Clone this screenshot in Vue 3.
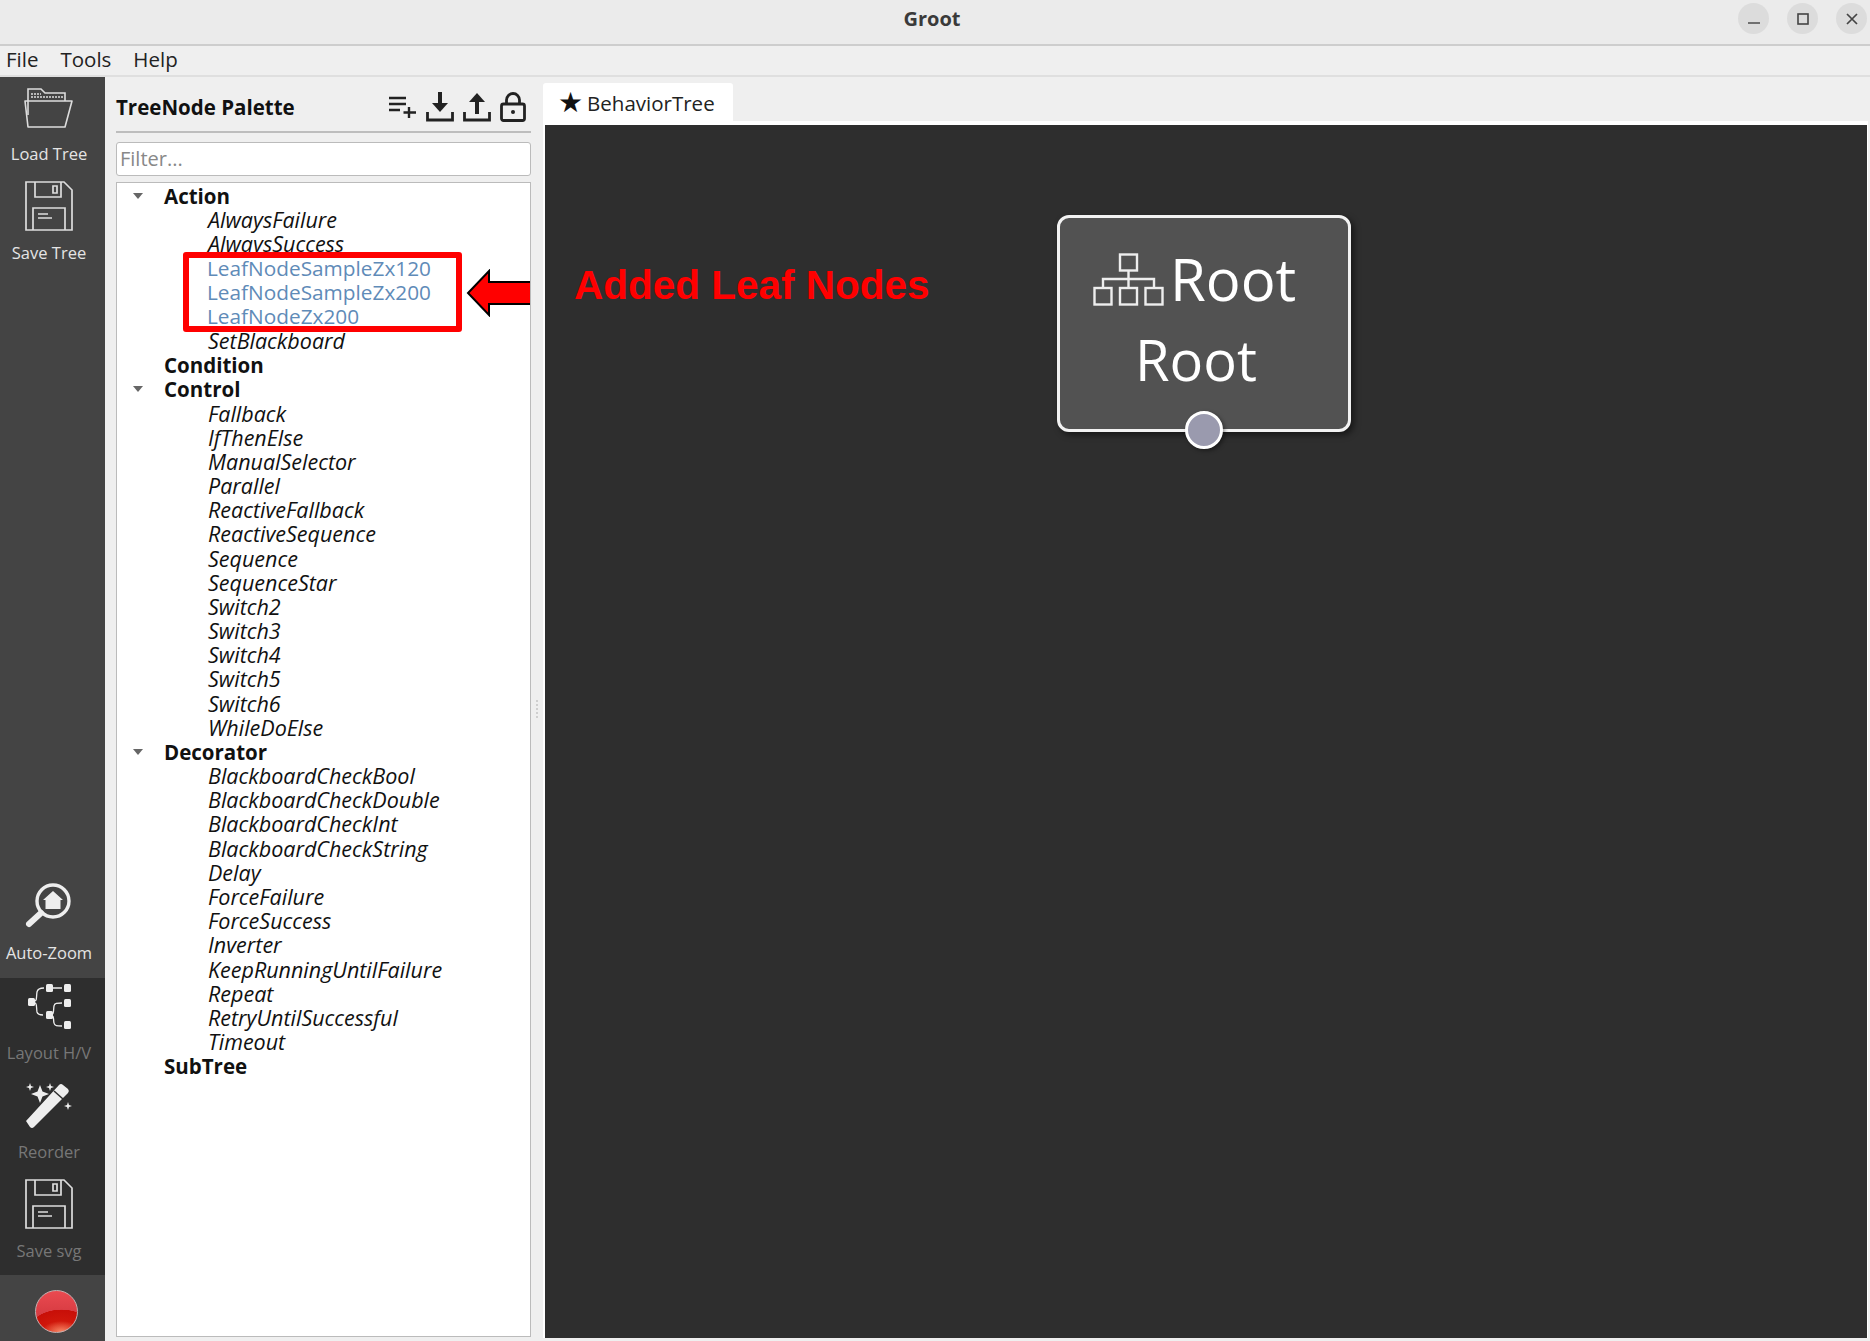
<template>
  <div class="window">
    <header class="titlebar">
      <span class="title">Groot</span>
      <div class="win-btns">
        <button class="win-btn"><svg width="14" height="14" viewBox="0 0 14 14"><path d="M1 11h12" stroke="#555" stroke-width="1.6" /></svg></button>
        <button class="win-btn"><svg width="14" height="14" viewBox="0 0 14 14"><rect x="2" y="2" width="10" height="10" fill="none" stroke="#444" stroke-width="1.6" /></svg></button>
        <button class="win-btn"><svg width="14" height="14" viewBox="0 0 14 14"><path d="M2 2l10 10M12 2L2 12" stroke="#444" stroke-width="1.7" /></svg></button>
      </div>
    </header>

    <nav class="menubar">
      <span>File</span><span>Tools</span><span>Help</span>
    </nav>

    <div class="body">
      <aside class="sidebar">
        <div class="tool top">
          <svg class="tool-icon" width="50" height="44" viewBox="0 0 50 44" fill="none" stroke="#ddd" stroke-width="1.6">
            <path d="M4 30V4h13l4 4h20v8" />
            <path d="M7 12h32M7 9h10" stroke-dasharray="2 1" />
            <path d="M1 16h47l-7 26H4z" stroke-linejoin="round" />
          </svg>
          <span>Load Tree</span>
        </div>
        <div class="tool top">
          <svg class="tool-icon" width="48" height="50" viewBox="0 0 48 50" fill="none" stroke="#ddd" stroke-width="1.7">
            <path d="M1 1h38l8 8v40H1z" />
            <path d="M10 1v15h26V1M28 5h4v7h-4z" />
            <path d="M8 49V27h32v22" />
            <path d="M13 33h10M13 37h14" stroke-width="1.5" />
          </svg>
          <span>Save Tree</span>
        </div>
        <div class="spacer"></div>
        <div class="tool zoom">
          <svg class="tool-icon" width="48" height="46" viewBox="0 0 48 46" fill="none">
            <circle cx="28" cy="18" r="16" stroke="#eee" stroke-width="3.4" />
            <path d="M16 30L4 41" stroke="#eee" stroke-width="6" stroke-linecap="round" />
            <path d="M28 8l10 9h-2.500v9h-15v-9H18z" fill="#eee" />
          </svg>
          <span>Auto-Zoom</span>
        </div>
        <div class="tool-group">
          <div class="tool dim">
            <svg class="tool-icon" width="44" height="46" viewBox="0 0 44 46" fill="none" stroke="#eee" stroke-width="1.3">
              <path d="M5 19c6 0 4-5 5-10 .5-3 3-4 7-4M5 19c6 0 4 5 5 10 .5 2 3 3 6 3M22 5h13M22 32c6 0 4-4 5-9 .5-3 3-3 8-3M22 32c6 0 4 4 5 8 .5 3 3 3 8 3" />
              <g fill="#eee" stroke="none">
                <rect x="1" y="15" width="7" height="8" rx="1.500" />
                <rect x="19" y="1" width="7" height="8" rx="1.500" />
                <rect x="37" y="1" width="7" height="8" rx="1.500" />
                <rect x="19" y="28" width="7" height="8" rx="1.500" />
                <rect x="37" y="16" width="7" height="8" rx="1.500" />
                <rect x="37" y="38" width="7" height="8" rx="1.500" />
              </g>
            </svg>
            <span>Layout H/V</span>
          </div>
          <div class="tool dim">
            <svg class="tool-icon" width="46" height="46" viewBox="0 0 46 46">
              <path d="M0 39L33 3a3 3 0 0 1 4 0l5 4a3 3 0 0 1 0 4L8 45a3 3 0 0 1-4 0z" fill="#eee" />
              <path d="M28 9l9 8" stroke="#2e2e2e" stroke-width="1.500" />
              <path d="M14 3l2.500 6.500L23 12l-6.500 2.500L14 21l-2.500-6.500L5 12l6.500-2.500zM4 1l1 3 3 1-3 1-1 3-1-3-3-1 3-1zM24 1l1 3 3 1-3 1-1 3-1-3-3-1 3-1zM42 20l1 3 3 1-3 1-1 3-1-3-3-1 3-1z" fill="#eee" />
            </svg>
            <span>Reorder</span>
          </div>
          <div class="tool dim">
            <svg class="tool-icon" width="48" height="48" viewBox="0 0 48 50" fill="none" stroke="#ddd" stroke-width="1.7">
              <path d="M1 1h38l8 8v40H1z" />
              <path d="M10 1v15h26V1M28 5h4v7h-4z" />
              <path d="M8 49V27h32v22" />
              <path d="M13 33h10M13 37h14" stroke-width="1.500" />
            </svg>
            <span>Save svg</span>
          </div>
        </div>
        <div class="ball-wrap">
          <div class="ball"></div>
        </div>
      </aside>

      <section class="palette">
        <div class="palette-head">
          <strong>TreeNode Palette</strong>
          <div class="palette-actions">
            <svg width="28" height="22" viewBox="0 0 28 22" fill="none" stroke="#222" stroke-width="2.400">
              <path d="M0 2h17M0 8h17M0 14h11M20 11v11M14.500 16.500H27" />
            </svg>
            <svg width="28" height="30" viewBox="0 0 28 30" fill="none" stroke="#222" stroke-width="2.800">
              <path d="M1.500 20v8h25v-8" />
              <path d="M14 0v12" stroke-width="4" />
              <path d="M6 11h16l-8 9z" fill="#222" stroke="none" />
            </svg>
            <svg width="28" height="30" viewBox="0 0 28 30" fill="none" stroke="#222" stroke-width="2.800">
              <path d="M1.500 20v8h25v-8" />
              <path d="M14 10v12" stroke-width="4" />
              <path d="M6 10h16l-8-9z" fill="#222" stroke="none" />
            </svg>
            <svg width="26" height="30" viewBox="0 0 26 30" fill="none" stroke="#222" stroke-width="2.800">
              <rect x="1.500" y="12" width="23" height="16.500" rx="2" />
              <path d="M6.500 12V8a6.500 6.500 0 0 1 13 0v4" />
              <circle cx="13" cy="20" r="2" fill="#222" stroke="none" />
            </svg>
          </div>
        </div>
        <input class="filter" type="text" placeholder="Filter..." />
        <div class="tree">
          <div v-for="cat in tree" :key="cat.name">
            <div class="row category">
              <span v-if="cat.items.length" class="caret"></span>
              {{ cat.name }}
            </div>
            <div
              v-for="item in cat.items"
              :key="item.name"
              class="row leaf"
              :class="{ added: item.added }"
            >{{ item.name }}</div>
          </div>
          <!-- annotation drawn over the list -->
          <div class="red-box"></div>
          <svg class="red-arrow" width="65" height="48" viewBox="0 0 65 48">
            <path d="M64 13H23V2L2 24l21 22V35h41" fill="#f00" stroke="#000" stroke-width="2" />
          </svg>
        </div>
      </section>

      <div class="splitter"><i></i><i></i><i></i><i></i><i></i></div>

      <section class="editor">
        <div class="tab"><span class="star">★</span>BehaviorTree</div>
        <div class="pane">
          <div class="canvas">
            <div class="note">Added Leaf Nodes</div>
            <div class="node">
              <div class="node-line first">
                <svg width="71" height="53" viewBox="0 0 71 53" fill="none" stroke="#eee" stroke-width="2.400">
                  <rect x="27" y="1.500" width="17" height="16" />
                  <rect x="1.500" y="35" width="17" height="16.500" />
                  <rect x="27" y="35" width="17" height="16.500" />
                  <rect x="52.500" y="35" width="17" height="16.500" />
                  <path d="M35.500 17.500V35M10 35v-9h51v9" />
                </svg>
                <span>Root</span>
              </div>
              <div class="node-line second">Root</div>
              <div class="port"></div>
            </div>
          </div>
        </div>
      </section>
    </div>
  </div>
</template>

<script setup>
const names = (list) => list.map((name) => ({ name }))

const tree = [
  {
    name: 'Action',
    items: [
      { name: 'AlwaysFailure' },
      { name: 'AlwaysSuccess' },
      { name: 'LeafNodeSampleZx120', added: true },
      { name: 'LeafNodeSampleZx200', added: true },
      { name: 'LeafNodeZx200', added: true },
      { name: 'SetBlackboard' }
    ]
  },
  { name: 'Condition', items: [] },
  {
    name: 'Control',
    items: names([
      'Fallback', 'IfThenElse', 'ManualSelector', 'Parallel', 'ReactiveFallback',
      'ReactiveSequence', 'Sequence', 'SequenceStar', 'Switch2', 'Switch3',
      'Switch4', 'Switch5', 'Switch6', 'WhileDoElse'
    ])
  },
  {
    name: 'Decorator',
    items: names([
      'BlackboardCheckBool', 'BlackboardCheckDouble', 'BlackboardCheckInt',
      'BlackboardCheckString', 'Delay', 'ForceFailure', 'ForceSuccess', 'Inverter',
      'KeepRunningUntilFailure', 'Repeat', 'RetryUntilSuccessful', 'Timeout'
    ])
  },
  { name: 'SubTree', items: [] }
]
</script>

<style>
html, body {
  margin: 0;
  background: #efefef;
}
</style>

<style scoped>
.window {
  width: 1870px;
  height: 1341px;
  display: flex;
  flex-direction: column;
  overflow: hidden;
  font-family: "Open Sans", "Noto Sans", sans-serif;
  background: #efefef;
  color: #111;
}

.titlebar {
  height: 44px;
  flex: none;
  position: relative;
  display: flex;
  align-items: center;
  justify-content: center;
  background: #ebebeb;
  border-bottom: 2px solid #cdcdcd;
}

.title {
  font-size: 20px;
  font-weight: 700;
  line-height: 38px;
  margin: 0 6px 6px 0;
  color: #3a3a3a;
}

.win-btns {
  position: absolute;
  right: 3px;
  top: 3px;
  display: flex;
  gap: 18px;
}

.win-btn {
  width: 31px;
  height: 31px;
  padding: 0;
  border: none;
  border-radius: 50%;
  background: #dcdcdc;
  display: flex;
  align-items: center;
  justify-content: center;
}

.menubar {
  height: 31px;
  flex: none;
  display: flex;
  align-items: center;
  gap: 22px;
  padding: 0 0 3px 6px;
  box-sizing: border-box;
  font-size: 20.500px;
  color: #222;
  border-bottom: 2px solid #dfdfdf;
}

.body {
  flex: 1;
  min-height: 0;
  display: flex;
}

.sidebar {
  width: 105px;
  flex: none;
  display: flex;
  flex-direction: column;
  background: #444;
}

.spacer {
  flex: 1;
}

.tool {
  height: 99px;
  display: flex;
  flex-direction: column;
  align-items: center;
  padding: 3px 7px 0 0;
  box-sizing: border-box;
  font-size: 16.500px;
  color: #e4e4e4;
}

.tool.top {
  padding-top: 5px;
}

.tool.zoom {
  padding-top: 2px;
}

.tool-icon {
  height: 50px;
  margin-bottom: 10px;
  flex: none;
}

.tool.dim {
  color: #777;
}

.tool-group {
  background: #2e2e2e;
}

.ball-wrap {
  height: 66px;
  box-sizing: border-box;
  display: flex;
  align-items: center;
  padding: 6px 0 0 35px;
}

.ball {
  width: 43px;
  height: 43px;
  box-sizing: border-box;
  border: 1px solid #c4b0b0;
  border-radius: 50%;
  background:
    radial-gradient(ellipse 20px 11px at 62% 100%, #f88a68 0%, transparent 100%),
    radial-gradient(ellipse 34px 23px at 62% 100%, #d8200f 0%, #c80f08 96%, transparent 98%),
    linear-gradient(#ea4a50, #c83038);
}

.palette {
  width: 415px;
  flex: none;
  margin-left: 11px;
  display: flex;
  flex-direction: column;
  padding-bottom: 4px;
}

.palette-head {
  height: 56px;
  flex: none;
  display: flex;
  align-items: center;
  justify-content: space-between;
  padding: 5px 5px 0 0;
  font-size: 20.500px;
  border-bottom: 2px solid #bdbdbd;
  box-sizing: border-box;
}

.palette-actions {
  display: flex;
  align-items: center;
  gap: 9px;
}

.filter {
  height: 34px;
  flex: none;
  margin-top: 9px;
  padding: 0 3px 2px;
  box-sizing: border-box;
  border: 1px solid #bbb;
  border-radius: 3px;
  background: #fff;
  font: 20px "Open Sans", "Noto Sans", sans-serif;
  outline: none;
}

.filter::placeholder {
  color: #888;
}

.tree {
  flex: 1;
  position: relative;
  margin-top: 6px;
  padding-top: 1px;
  background: #fff;
  border: 1px solid #bbb;
  overflow: hidden;
  font-size: 20.500px;
}

.row {
  height: 24.180px;
  line-height: 24.180px;
  white-space: nowrap;
}

.category {
  position: relative;
  padding-left: 47px;
  font-weight: 700;
}

.caret {
  position: absolute;
  left: 16px;
  top: 9px;
  border: 5px solid transparent;
  border-top: 6px solid #666;
  border-bottom: none;
}

.leaf {
  padding-left: 91px;
  font-style: italic;
  font-size: 21.500px;
  line-height: 23px;
}

.leaf.added {
  padding-left: 90px;
  font-style: normal;
  font-size: 20.800px;
  color: #5f8bb8;
}

.red-box {
  position: absolute;
  left: 66px;
  top: 69px;
  width: 279px;
  height: 80px;
  box-sizing: border-box;
  border: 6px solid #f00;
  border-radius: 3px;
}

.red-arrow {
  position: absolute;
  left: 349px;
  top: 86px;
}

.splitter {
  width: 12px;
  flex: none;
  display: flex;
  flex-direction: column;
  align-items: center;
  justify-content: center;
  gap: 2px;
}

.splitter i {
  width: 2px;
  height: 2px;
  background: #cfcfcf;
}

.editor {
  flex: 1;
  min-width: 0;
  display: flex;
  flex-direction: column;
  padding: 6px 2px 3px 0;
}

.tab {
  width: 190px;
  height: 38px;
  flex: none;
  display: flex;
  align-items: center;
  box-sizing: border-box;
  padding: 1px 0 0 15px;
  background: #fff;
  border-radius: 3px 3px 0 0;
  font-size: 20.500px;
  color: #222;
}

.star {
  font-size: 28px;
  line-height: 28px;
  margin-right: 4px;
  color: #111;
  font-family: "DejaVu Sans", sans-serif;
}

.pane {
  flex: 1;
  min-height: 0;
  display: flex;
  padding: 4px 1px 0 2px;
  background: #fff;
}

.canvas {
  flex: 1;
  position: relative;
  background: #2e2e2e;
}

.note {
  position: absolute;
  left: 29px;
  top: 135px;
  font-family: "Liberation Sans", Arial, sans-serif;
  font-size: 40.500px;
  font-weight: 700;
  line-height: 50px;
  color: #f00;
}

.node {
  position: absolute;
  left: 512px;
  top: 90px;
  width: 294px;
  height: 217px;
  box-sizing: border-box;
  border: 3px solid #f2f2f2;
  border-radius: 12px;
  background: #525252;
  box-shadow: 3px 3px 6px rgba(0, 0, 0, 0.5);
  color: #fff;
  font-size: 58px;
}

.node-line {
  line-height: 80px;
  white-space: nowrap;
}

.first {
  display: flex;
  align-items: center;
  gap: 6px;
  padding: 21px 0 0 33px;
}

.first svg {
  flex: none;
}

.second {
  text-align: center;
  font-size: 56px;
  padding-right: 16px;
}

.port {
  position: absolute;
  left: 125px;
  bottom: -20px;
  width: 38px;
  height: 38px;
  box-sizing: border-box;
  border: 3px solid #fff;
  border-radius: 50%;
  background: #9a9aae;
  box-shadow: 2px 2px 4px rgba(0, 0, 0, 0.4);
}
</style>
